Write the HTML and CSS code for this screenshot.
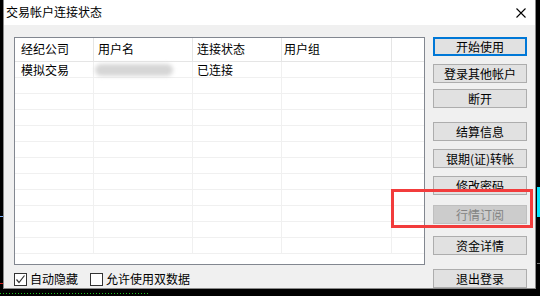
FILE: index.html
```html
<!DOCTYPE html>
<html lang="zh">
<head>
<meta charset="utf-8">
<link rel="stylesheet" href="styles.css">
</head>
<body>
<div class="desktop">
  <div class="window">
    <div class="titlebar">
      <span class="title">交易帐户连接状态</span>
      <svg class="close" width="10" height="10" viewBox="0 0 10 10"><path d="M0.5 0.5L9.5 9.5M9.5 0.5L0.5 9.5" stroke="#000" stroke-width="1.1" fill="none"/></svg>
    </div>
    <div class="content">
      <div class="left">
        <div class="list">
          <div class="row header">
            <div class="cell c1">经纪公司</div>
            <div class="cell c2">用户名</div>
            <div class="cell c3">连接状态</div>
            <div class="cell c4">用户组</div>
            <div class="cell c5"></div>
          </div>
          <div class="row">
            <div class="cell c1">模拟交易</div>
            <div class="cell c2"><span class="blur"></span></div>
            <div class="cell c3">已连接</div>
            <div class="cell c4"></div>
            <div class="cell c5"></div>
          </div>
          <div class="row"><div class="cell c1"></div><div class="cell c2"></div><div class="cell c3"></div><div class="cell c4"></div><div class="cell c5"></div></div>
          <div class="row"><div class="cell c1"></div><div class="cell c2"></div><div class="cell c3"></div><div class="cell c4"></div><div class="cell c5"></div></div>
          <div class="row"><div class="cell c1"></div><div class="cell c2"></div><div class="cell c3"></div><div class="cell c4"></div><div class="cell c5"></div></div>
          <div class="row"><div class="cell c1"></div><div class="cell c2"></div><div class="cell c3"></div><div class="cell c4"></div><div class="cell c5"></div></div>
          <div class="row"><div class="cell c1"></div><div class="cell c2"></div><div class="cell c3"></div><div class="cell c4"></div><div class="cell c5"></div></div>
          <div class="row"><div class="cell c1"></div><div class="cell c2"></div><div class="cell c3"></div><div class="cell c4"></div><div class="cell c5"></div></div>
          <div class="row"><div class="cell c1"></div><div class="cell c2"></div><div class="cell c3"></div><div class="cell c4"></div><div class="cell c5"></div></div>
          <div class="row"><div class="cell c1"></div><div class="cell c2"></div><div class="cell c3"></div><div class="cell c4"></div><div class="cell c5"></div></div>
          <div class="row"><div class="cell c1"></div><div class="cell c2"></div><div class="cell c3"></div><div class="cell c4"></div><div class="cell c5"></div></div>
          <div class="row"><div class="cell c1"></div><div class="cell c2"></div><div class="cell c3"></div><div class="cell c4"></div><div class="cell c5"></div></div>
          <div class="row"><div class="cell c1"></div><div class="cell c2"></div><div class="cell c3"></div><div class="cell c4"></div><div class="cell c5"></div></div>
        </div>
        <div class="options">
          <label class="opt"><span class="check"><svg width="11" height="11" viewBox="0 0 11 11"><path d="M1.5 5.5L4 8.5L9.5 1.5" stroke="#333" stroke-width="1.2" fill="none"/></svg></span>自动隐藏</label>
          <label class="opt"><span class="check"></span>允许使用双数据</label>
        </div>
      </div>
      <div class="buttons">
        <div class="btn default">开始使用</div>
        <div class="btn g7">登录其他帐户</div>
        <div class="btn g5">断开</div>
        <div class="btn g13">结算信息</div>
        <div class="btn g7">银期(证)转帐</div>
        <div class="btn g7">修改密码</div>
        <div class="btn g8 disabled">行情订阅</div>
        <div class="btn g11">资金详情</div>
        <div class="btn g13">退出登录</div>
      </div>
    </div>
  </div>
  <div class="highlight"></div>
  <div class="art art-cyan"></div>
  <div class="art art-blue"></div>
  <div class="art art-red"></div>
  <div class="art art-green"></div>
  <div class="art art-grey"></div>
</div>
</body>
</html>
```

FILE: styles.css
```css
* { box-sizing: border-box; }
html, body {
  margin: 0;
  padding: 0;
  background: #000;
}
body {
  width: 540px;
  height: 296px;
  overflow: hidden;
  font-family: "Noto Sans CJK SC", "Microsoft YaHei", sans-serif;
  font-size: 12px;
  color: #000;
}
.desktop {
  position: relative;
  width: 540px;
  height: 296px;
}
.window {
  margin-left: 3px;
  width: 533px;
  height: 289px;
  border-left: 1px solid #8a8a8a;
  border-right: 1px solid #8a8a8a;
  border-bottom: 1px solid #8a8a8a;
  display: flex;
  flex-direction: column;
  background: #f0f0f0;
}
.titlebar {
  height: 26px;
  background: #fff;
  display: flex;
  align-items: center;
  justify-content: space-between;
  padding: 0 9px 0 2px;
}
.title {
  font-size: 12px;
  line-height: 14px;
  margin-top: -1px;
}
.close { display: block; margin-top: 1px; }
.content {
  flex: 1;
  display: flex;
  padding: 12px 8px 0 10px;
}
.left {
  width: 411px;
  display: flex;
  flex-direction: column;
}
.list {
  height: 228px;
  border: 1px solid #828790;
  background: #fff;
  overflow: hidden;
}
.row {
  display: flex;
  height: 16px;
  border-bottom: 1px solid #f0f0f0;
}
.row.header {
  height: 24px;
  border-bottom: 1px solid #e5e5e5;
}
.cell {
  border-right: 1px solid #f0f0f0;
  padding-left: 6px;
  line-height: 15px;
  white-space: nowrap;
  position: relative;
}
.header .cell {
  border-right: 1px solid #e5e5e5;
  line-height: 22px;
}
.c1 { width: 79px; }
.c2 { width: 99px; padding-left: 4px; }
.c3 { width: 89px; padding-left: 4px; }
.c4 { width: 110px; padding-left: 2px; }
.c5 { flex: 1; border-right: none !important; }
.blur {
  display: block;
  width: 78px;
  height: 12px;
  margin-top: 2px;
  margin-left: -3px;
  background: #d6d6d6;
  border-radius: 6px;
  filter: blur(2px);
}
.options {
  display: flex;
  gap: 12px;
  margin-top: 6px;
  height: 16px;
}
.opt {
  display: flex;
  align-items: center;
  gap: 3px;
  font-size: 12px;
  line-height: 14px;
}
.check {
  width: 13px;
  height: 13px;
  border: 1px solid #333;
  background: #fff;
  display: flex;
  align-items: center;
  justify-content: center;
}
.check svg { display: block; }
.buttons {
  margin-left: 8px;
  width: 94px;
  display: flex;
  flex-direction: column;
}
.btn {
  height: 19px;
  border: 1px solid #adadad;
  background: #e1e1e1;
  text-align: center;
  line-height: 17px;
  font-size: 12px;
}
.btn.default {
  border: 2px solid #0078d7;
  line-height: 15px;
}
.btn.disabled {
  background: #cccccc;
  border-color: #bfbfbf;
  color: #838383;
}
.g5 { margin-top: 6px; }
.g7 { margin-top: 8px; }
.g8 { margin-top: 10px; }
.g11 { margin-top: 12px; }
.g13 { margin-top: 14px; }
.highlight {
  position: absolute;
  left: 391px;
  top: 189px;
  width: 142px;
  height: 39px;
  border: 3px solid #f23c3c;
}
.art { position: absolute; }
.art-cyan { left: 537px; top: 187px; width: 3px; height: 30px; background: #00e5ff; }
.art-blue { left: 0; top: 216px; width: 3px; height: 1px; background: #7fb4ff; }
.art-red { left: 0; top: 283px; width: 3px; height: 1px; background: #d02020; }
.art-green {
  left: 0; top: 293px; width: 150px; height: 1px;
  background: repeating-linear-gradient(90deg, #22c022 0 1px, transparent 1px 3px);
}
.art-grey { left: 537px; top: 263px; width: 3px; height: 1px; background: #777; }
```
